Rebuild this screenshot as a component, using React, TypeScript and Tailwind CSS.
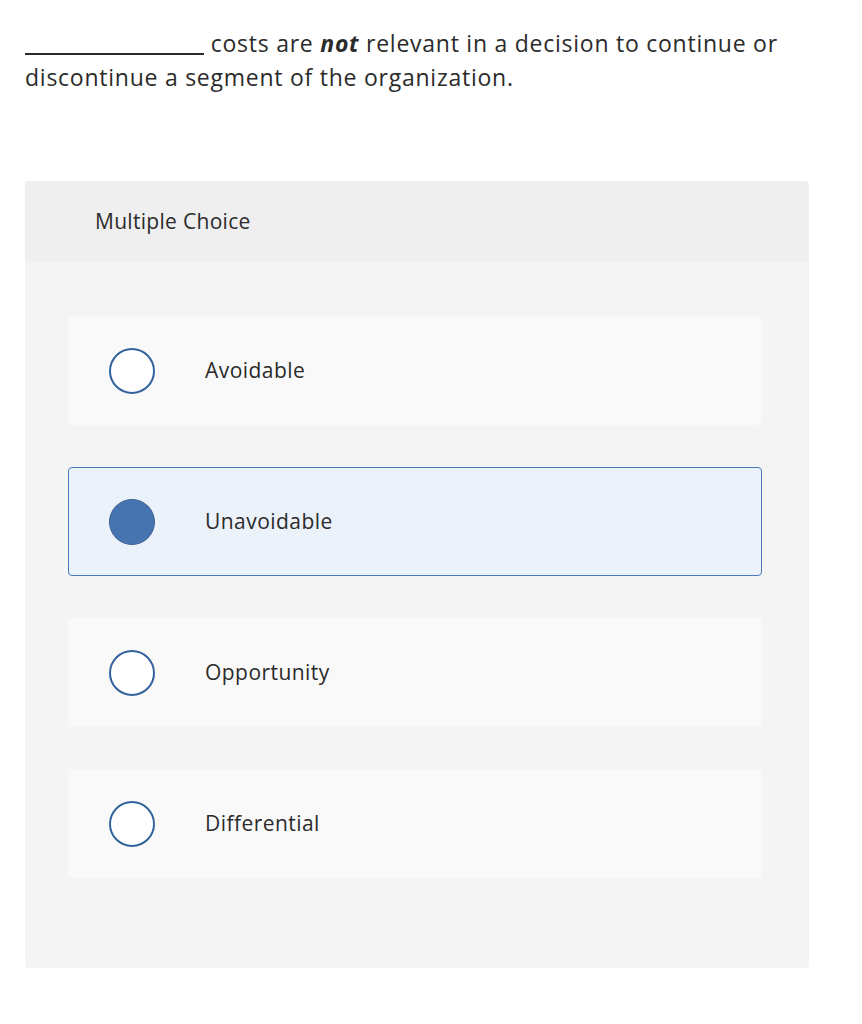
import React from "react";

const options = [
  { label: "Avoidable", selected: false },
  { label: "Unavoidable", selected: true },
  { label: "Opportunity", selected: false },
  { label: "Differential", selected: false },
];

export default function App() {
  return (
    <div className="min-h-screen bg-white text-[#2b2b2b]" style={{ fontFamily: "'Open Sans', Lato, sans-serif" }}>
      <div className="pl-[25px] pr-[10px] pt-[26px] text-[23px] leading-[34px] tracking-[0.75px]">
        <span className="inline-block w-[179px] h-[20px] border-b-2 border-[#2b2b2b] align-baseline translate-y-[3px]"></span>{" "}
        costs are <b><i>not</i></b> relevant in a decision to continue or
        <br />
        discontinue a segment of the organization.
      </div>
      <div className="mt-[87px] ml-[25px] w-[784px] rounded-[4px] bg-[#f4f4f4] overflow-hidden">
        <div className="h-[82px] bg-[#efefef] flex items-center pl-[70px] text-[21px] tracking-[0.3px]">Multiple Choice</div>
        <div className="pl-[43px] pr-[47px] pt-[53px] pb-[90px] flex flex-col gap-[42px]">
          {options.map((o) => (
            <div
              key={o.label}
              className={
                o.selected
                  ? "h-[109px] rounded-[4px] border-[1.5px] border-[#4a78b8] bg-[#ebf2fa] flex items-center"
                  : "h-[109px] rounded-[4px] border-[1.5px] border-transparent bg-[#f9f9f9] flex items-center"
              }
            >
              <div
                className={
                  o.selected
                    ? "ml-[40px] w-[46px] h-[46px] rounded-full border-[1.5px] border-[#3b5f92] bg-[#4674b0]"
                    : "ml-[40px] w-[46px] h-[46px] rounded-full border-2 border-[#33639c] bg-white"
                }
              ></div>
              <div className="ml-[50px] text-[21px] tracking-[0.45px]">{o.label}</div>
            </div>
          ))}
        </div>
      </div>
    </div>
  );
}
